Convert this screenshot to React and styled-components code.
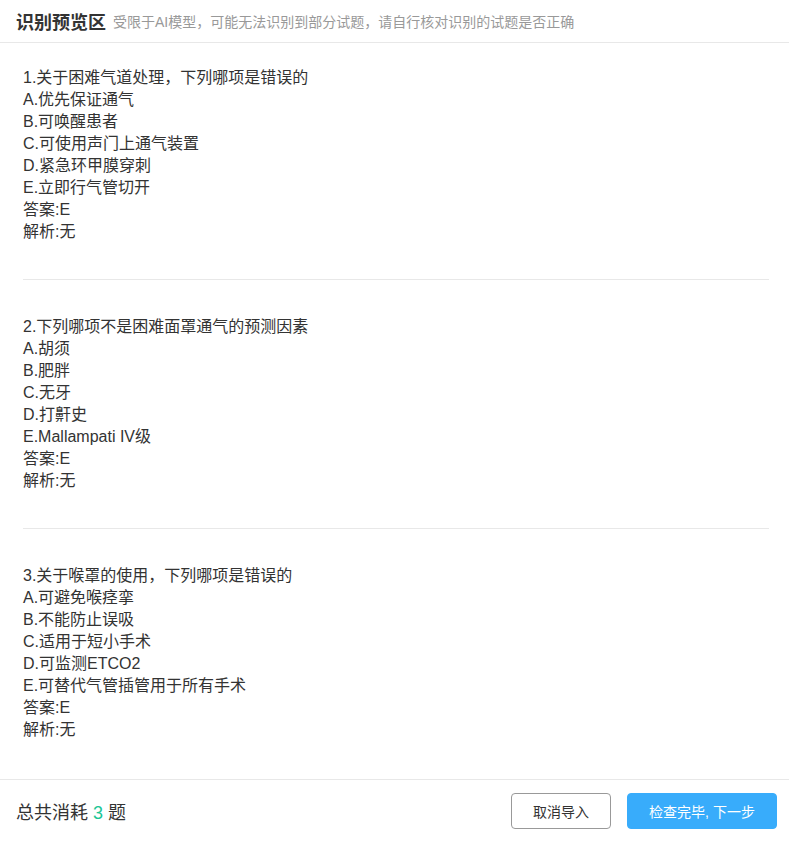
import React from "react";
import styled, { createGlobalStyle } from "styled-components";

const questions = [
  {
    title: "1.关于困难气道处理，下列哪项是错误的",
    options: ["A.优先保证通气", "B.可唤醒患者", "C.可使用声门上通气装置", "D.紧急环甲膜穿刺", "E.立即行气管切开"],
    answer: "E",
    analysis: "无",
  },
  {
    title: "2.下列哪项不是困难面罩通气的预测因素",
    options: ["A.胡须", "B.肥胖", "C.无牙", "D.打鼾史", "E.Mallampati IV级"],
    answer: "E",
    analysis: "无",
  },
  {
    title: "3.关于喉罩的使用，下列哪项是错误的",
    options: ["A.可避免喉痉挛", "B.不能防止误吸", "C.适用于短小手术", "D.可监测ETCO2", "E.可替代气管插管用于所有手术"],
    answer: "E",
    analysis: "无",
  },
];

function App() {
  return (
    <>
      <GlobalStyle />
      <Page>
        <Header>
          <Title>识别预览区</Title>
          <Hint>受限于AI模型，可能无法识别到部分试题，请自行核对识别的试题是否正确</Hint>
        </Header>

        <Content>
          {questions.map((q, i) => (
            <Question key={i} last={i === questions.length - 1}>
              <Line>{q.title}</Line>
              {q.options.map((o) => (
                <Line key={o}>{o}</Line>
              ))}
              <Line>答案:{q.answer}</Line>
              <Line>解析:{q.analysis}</Line>
            </Question>
          ))}
        </Content>

        <Footer>
          <Total>
            总共消耗 <Count>3</Count> 题
          </Total>
          <Actions>
            <Button>取消导入</Button>
            <Button primary>检查完毕, 下一步</Button>
          </Actions>
        </Footer>
      </Page>
    </>
  );
}

const GlobalStyle = createGlobalStyle`
  html, body, #root {
    margin: 0;
    height: 100%;
  }
  body {
    font-family: "Liberation Sans", "Noto Sans CJK SC", sans-serif;
    color: #333;
    background: #fff;
  }
`;

const Page = styled.div`
  height: 100vh;
  display: flex;
  flex-direction: column;
`;

const Header = styled.div`
  height: 42px;
  flex-shrink: 0;
  display: flex;
  align-items: center;
  padding: 0 16px;
  border-bottom: 1px solid #e8e8e8;
  box-sizing: content-box;
`;

const Title = styled.span`
  font-size: 18px;
  font-weight: 700;
  color: #333;
  margin-right: 7px;
`;

const Hint = styled.span`
  font-size: 14px;
  color: #999;
`;

const Content = styled.div`
  flex: 1;
  overflow: hidden;
  padding: 24px 20px 0 23px;
`;

const Question = styled.div`
  padding-bottom: ${(p) => (p.last ? "0" : "36px")};
  margin-bottom: 36px;
  border-bottom: ${(p) => (p.last ? "none" : "1px solid #e8e8e8")};
`;

const Line = styled.div`
  font-size: 16px;
  line-height: 22px;
  color: #333;
`;

const Footer = styled.div`
  height: 62px;
  flex-shrink: 0;
  display: flex;
  align-items: center;
  justify-content: space-between;
  padding: 0 12px 0 16px;
  border-top: 1px solid #e8e8e8;
`;

const Total = styled.div`
  font-size: 18px;
  color: #333;
`;

const Count = styled.span`
  color: #1cc595;
`;

const Actions = styled.div`
  display: flex;
  gap: 16px;
`;

const Button = styled.button`
  height: 36px;
  width: ${(p) => (p.primary ? "150px" : "100px")};
  border-radius: 4px;
  font-family: inherit;
  font-size: 14px;
  cursor: pointer;
  border: 1px solid ${(p) => (p.primary ? "#38acfb" : "#999")};
  background: ${(p) => (p.primary ? "#38acfb" : "#fff")};
  color: ${(p) => (p.primary ? "#fff" : "#333")};
`;

export default App;
